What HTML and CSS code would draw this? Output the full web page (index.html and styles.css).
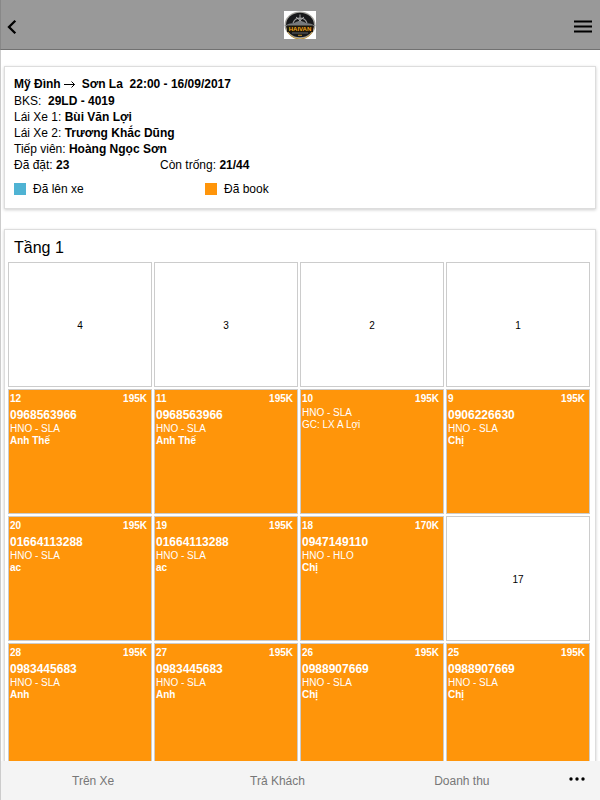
FILE: index.html
```html
<!DOCTYPE html>
<html lang="vi">
<head>
<meta charset="utf-8">
<meta name="viewport" content="width=device-width, initial-scale=1">
<title>Sơ đồ ghế</title>
<link rel="stylesheet" href="styles.css">
</head>
<body>
<div class="app">
  <header class="topbar">
    <button class="icon-button" type="button" aria-label="Quay lại">
      <svg width="10" height="14" viewBox="0 0 10 14"><path d="M8.3 0.8 2 7l6.300 6.200" fill="none" stroke="#000" stroke-width="2.300"/></svg>
    </button>
    <svg class="logo" width="32" height="28" viewBox="0 0 32 28" role="img" aria-label="Hải Vân">
      <rect width="32" height="28" fill="#fff"/>
      <ellipse cx="16" cy="14" rx="15.500" ry="13.500" fill="#a5a49f"/>
      <ellipse cx="16" cy="14" rx="14" ry="12.200" fill="#17181a"/>
      <path d="M3 17a13 11 0 0 0 26 0" fill="none" stroke="#b98f35" stroke-width="1"/>
      <path d="M9 12a7.500 7.500 0 0 1 14 0" fill="none" stroke="#999" stroke-width="1.200"/>
      <path d="M16 3.500v9M12 6l8 7M20 6l-8 7" stroke="#bbb" stroke-width="0.900"/>
      <path d="M0 15q5-3 10-3 3-2 6-2t6 2q5 0 10 3z" fill="#777a7d"/>
      <rect x="3" y="14.500" width="26" height="6.500" fill="#1d1608"/>
      <text class="logo-name" x="16" y="20" text-anchor="middle">HAIVAN</text>
      <path d="M8 22h16" stroke="#777" stroke-width="0.800"/>
      <path d="M14 24.300h4" stroke="#c89224"/>
    </svg>
    <button class="icon-button icon-button-end" type="button" aria-label="Menu">
      <svg width="18" height="13" viewBox="0 0 18 13"><path d="M0 1.500h18M0 6.500h18M0 11.500h18" stroke="#000" stroke-width="2"/></svg>
    </button>
  </header>

  <main class="content">
    <section class="card trip">
      <h1 class="trip-title">Mỹ Đình <svg class="arrow" width="11" height="7" viewBox="0 0 11 7" role="img" aria-label="đến"><path d="M0 3.500h10.500M7.500 0.500l3 3-3 3" fill="none" stroke="#000"/></svg>&nbsp; Sơn La&nbsp; 22:00 - 16/09/2017</h1>
      <p>BKS:&nbsp; <b>29LD - 4019</b></p>
      <p>Lái Xe 1: <b>Bùi Văn Lợi</b></p>
      <p>Lái Xe 2: <b>Trương Khắc Dũng</b></p>
      <p>Tiếp viên: <b>Hoàng Ngọc Sơn</b></p>
      <div class="counts"><p>Đã đặt: <b>23</b></p><p>Còn trống: <b>21/44</b></p></div>
      <div class="legend">
        <p class="legend-item"><span class="swatch swatch-boarded"></span>Đã lên xe</p>
        <p class="legend-item"><span class="swatch swatch-booked"></span>Đã book</p>
      </div>
    </section>

    <section class="card floor">
      <h2 class="floor-title">Tầng 1</h2>
      <div class="seats">
        <button class="seat empty" type="button">4</button>
        <button class="seat empty" type="button">3</button>
        <button class="seat empty" type="button">2</button>
        <button class="seat empty" type="button">1</button>

        <button class="seat booked" type="button"><span class="seat-top"><span>12</span><span>195K</span></span><span class="phone">0968563966</span><span class="route">HNO - SLA</span><span class="guest">Anh Thế</span></button>
        <button class="seat booked" type="button"><span class="seat-top"><span>11</span><span>195K</span></span><span class="phone">0968563966</span><span class="route">HNO - SLA</span><span class="guest">Anh Thế</span></button>
        <button class="seat booked" type="button"><span class="seat-top"><span>10</span><span>195K</span></span><span class="route">HNO - SLA</span><span class="route">GC: LX A Lợi</span></button>
        <button class="seat booked" type="button"><span class="seat-top"><span>9</span><span>195K</span></span><span class="phone">0906226630</span><span class="route">HNO - SLA</span><span class="guest">Chị</span></button>

        <button class="seat booked" type="button"><span class="seat-top"><span>20</span><span>195K</span></span><span class="phone">01664113288</span><span class="route">HNO - SLA</span><span class="guest">ac</span></button>
        <button class="seat booked" type="button"><span class="seat-top"><span>19</span><span>195K</span></span><span class="phone">01664113288</span><span class="route">HNO - SLA</span><span class="guest">ac</span></button>
        <button class="seat booked" type="button"><span class="seat-top"><span>18</span><span>170K</span></span><span class="phone">0947149110</span><span class="route">HNO - HLO</span><span class="guest">Chị</span></button>
        <button class="seat empty" type="button">17</button>

        <button class="seat booked" type="button"><span class="seat-top"><span>28</span><span>195K</span></span><span class="phone">0983445683</span><span class="route">HNO - SLA</span><span class="guest">Anh</span></button>
        <button class="seat booked" type="button"><span class="seat-top"><span>27</span><span>195K</span></span><span class="phone">0983445683</span><span class="route">HNO - SLA</span><span class="guest">Anh</span></button>
        <button class="seat booked" type="button"><span class="seat-top"><span>26</span><span>195K</span></span><span class="phone">0988907669</span><span class="route">HNO - SLA</span><span class="guest">Chị</span></button>
        <button class="seat booked" type="button"><span class="seat-top"><span>25</span><span>195K</span></span><span class="phone">0988907669</span><span class="route">HNO - SLA</span><span class="guest">Chị</span></button>
      </div>
    </section>
  </main>

  <nav class="tabs">
    <button class="tab" type="button">Trên Xe</button>
    <button class="tab" type="button">Trả Khách</button>
    <button class="tab" type="button">Doanh thu</button>
    <button class="more" type="button" aria-label="Thêm"><svg width="16" height="4" viewBox="0 0 16 4"><circle cx="2" cy="2" r="1.700"/><circle cx="8" cy="2" r="1.700"/><circle cx="14" cy="2" r="1.700"/></svg></button>
  </nav>
</div>
</body>
</html>
```

FILE: styles.css
```css
* { box-sizing: border-box; }

body {
  margin: 0;
  background: #fff;
  color: #000;
  font: 12px/16px "Liberation Sans", Arial, sans-serif;
}

h1, h2, p { margin: 0; }

button {
  margin: 0;
  padding: 0;
  border: 0;
  background: none;
  color: inherit;
  font: inherit;
}

svg { flex: none; }

.app {
  display: flex;
  flex-direction: column;
  height: 100vh;
  border-left: 1px solid #ccc;
}

.topbar {
  display: flex;
  flex: none;
  align-items: center;
  justify-content: space-between;
  height: 50px;
  padding: 4px 8px 0 6px;
  margin-left: -1px;
  border-bottom: 1px solid #717171;
  border-left: 1px solid #888;
  background: #999;
}

.icon-button {
  display: flex;
  align-items: center;
  width: 32px;
  height: 32px;
}

.icon-button-end { justify-content: flex-end; }

.logo { margin-bottom: 3px; }

.logo-name {
  fill: #f2a51c;
  font: bold 6px "Liberation Sans", Arial, sans-serif;
}

.content {
  flex: 1;
  min-height: 0;
  overflow: hidden;
  padding: 16px 4px 0 3px;
}

.card {
  border: 1px solid #ddd;
  background: #fff;
  box-shadow: 0 1px 3px rgba(0, 0, 0, 0.2);
}

.trip { padding: 9px 9px 11px; }

.trip-title {
  margin-bottom: 1px;
  font-size: 12px;
  line-height: 16px;
}

.counts {
  display: grid;
  grid-template-columns: 146px 1fr;
}

.legend {
  display: grid;
  grid-template-columns: 191px 1fr;
  margin-top: 8px;
}

.legend-item {
  display: flex;
  align-items: center;
  gap: 7px;
}

.swatch {
  width: 12px;
  height: 12px;
}

.swatch-boarded { background: #4fb3d3; }
.swatch-booked { background: #ff950a; }

.floor {
  margin-top: 20px;
  padding: 0 5px 5px 3px;
}

.floor-title {
  padding: 4px 6px 0;
  font-size: 16px;
  font-weight: 400;
  line-height: 28px;
}

.seats {
  display: grid;
  grid-template-columns: repeat(4, 1fr);
  grid-auto-rows: 125px;
  gap: 2px;
}

.seat {
  padding: 1px 4px 0 1px;
  border: 1px solid #ccc;
  font-size: 10px;
  line-height: 12px;
}

.empty {
  padding: 2px 0 0;
  background: #fff;
}

.booked {
  display: flex;
  flex-direction: column;
  background: #ff950a;
  color: #fff;
  text-align: left;
}

.seat-top {
  display: flex;
  justify-content: space-between;
  font-weight: 700;
  line-height: 16px;
}

.phone {
  font-size: 12px;
  font-weight: 700;
  line-height: 16px;
}

.guest { font-weight: 700; }

.tabs {
  display: flex;
  flex: none;
  height: 39px;
  background: #f4f4f4;
  color: #777;
}

.tab { flex: 1; }

.more {
  display: flex;
  align-items: center;
  justify-content: center;
  width: 46px;
  padding-bottom: 3px;
}
```
